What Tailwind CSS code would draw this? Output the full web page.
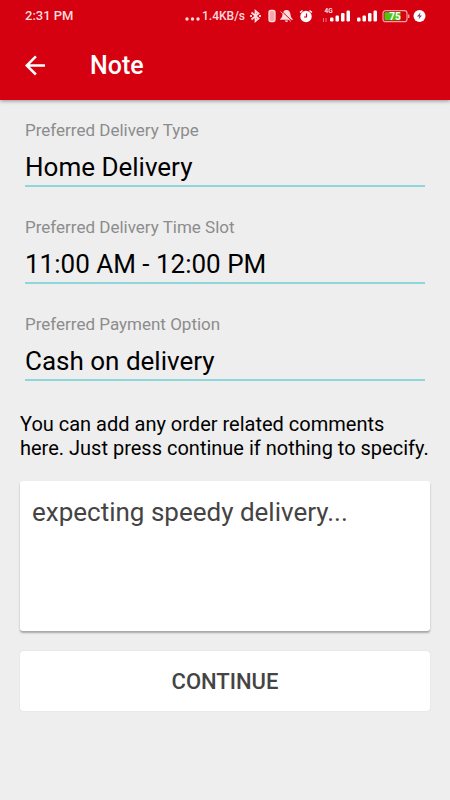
<!DOCTYPE html>
<html lang="en">
<head>
    <meta charset="UTF-8">
    <meta name="viewport" content="width=device-width, initial-scale=1.0">
    <title>Note</title>
    <script src="https://cdn.jsdelivr.net/npm/@tailwindcss/browser@4"></script>
</head>
<body class="bg-[#eeeeee] text-black font-['Roboto',sans-serif] min-h-screen">

    <header class="bg-[#d50010] text-white shadow-[0_1px_4px_rgba(0,0,0,0.4)]">
        <!-- Status bar -->
        <div class="flex items-center justify-between h-8 pl-[25px] pr-6 text-[#ffdcdc] text-[12px] font-medium">
            <span class="text-[13px]">2:31 PM</span>
            <div class="flex items-center">
                <svg class="w-4 h-4 mr-px" viewBox="0 0 16 16" fill="currentColor"><circle cx="2" cy="11" r="1.7"/><circle cx="7.5" cy="11" r="1.7"/><circle cx="13" cy="11" r="1.7"/></svg>
                <span>1.4KB/s</span>
                <!-- Bluetooth -->
                <svg class="w-3 h-4 ml-[5px]" viewBox="0 0 12 16" fill="none" stroke="currentColor" stroke-width="1.8"><path d="M1.5 4.5 L8.500 10.500 L5.500 13 V3 L8.500 5.500 L1.500 11.500"/><path d="M0 8h2M9 8h2"/></svg>
                <!-- Device battery -->
                <svg class="w-2 h-4 ml-1.5" viewBox="0 0 8 16"><rect x="1" y="2.5" width="6" height="11" rx="1.5" fill="#f3a9a9" stroke="currentColor" stroke-width="1.3"/></svg>
                <!-- Muted bell -->
                <svg class="w-4 h-4 ml-[3px]" viewBox="0 0 16 16" fill="currentColor"><path d="M7.500 2C5 2 3.800 4 3.500 6.500L3 9L.8 11.800h13.400L12 9l-.5-2.500C11.200 4 10 2 7.500 2z"/><path d="M5.800 12.500h3.400a1.700 1.500 0 0 1-3.400 0z"/><path d="M2.500 3l10.500 10" stroke="#d50010" stroke-width="1"/><path d="M1.500 3.500l10.500 10" stroke="currentColor" stroke-width=".8"/></svg>
                <!-- Alarm -->
                <svg class="w-[14px] h-4 ml-1" viewBox="0 0 14 16"><circle cx="7" cy="8.500" r="5.700" fill="#fff"/><path d="M1 4.500L3.500 2.500M13 4.500L10.500 2.500" stroke="#fff" stroke-width="1.500"/><path d="M7.500 5.500v3.500H5" fill="none" stroke="#d50010" stroke-width="1.200"/></svg>
                <!-- Signal with network type -->
                <svg class="w-7 h-4 ml-[10px]" viewBox="0 0 28 16" fill="#fff"><text x="1.500" y="5" font-size="6.500" font-weight="500">4G</text><path d="M.5 10v4M3 10v4" stroke="#f08080" stroke-width=".9"/><rect x="7" y="9.500" width="3.500" height="4" rx="1.200"/><rect x="12.500" y="7.500" width="3.500" height="6" rx="1.200"/><rect x="18" y="5" width="3.500" height="8.500" rx="1.200"/><rect x="23.500" y="2.500" width="3.500" height="11" rx="1.200"/></svg>
                <svg class="w-5 h-4 ml-1.5" viewBox="0 0 20 16" fill="#fff"><rect x="0" y="9.500" width="3.500" height="4" rx="1.200"/><rect x="5.500" y="7.500" width="3.500" height="6" rx="1.200"/><rect x="11" y="5" width="3.500" height="8.500" rx="1.200"/><rect x="16.500" y="2.500" width="3.500" height="11" rx="1.200"/></svg>
                <!-- Battery level -->
                <svg class="w-7 h-4 ml-[5px]" viewBox="0 0 28 16"><rect x="1" y="2.700" width="24" height="11" rx="2.500" fill="none" stroke="#f7a0a0" stroke-width="1.200"/><rect x="2.500" y="4.200" width="16" height="8" rx="1" fill="#4fc414"/><path d="M26.700 6.500v3.500" stroke="#f7a0a0" stroke-width="1.400"/><text x="13" y="11.700" font-size="10" font-weight="700" fill="#fff" text-anchor="middle">75</text></svg>
                <!-- Charging -->
                <svg class="w-[13px] h-4 ml-[3px]" viewBox="0 0 13 16"><circle cx="6.500" cy="8" r="6" fill="#fff"/><path d="M7.500 4.500L4 8.600h2.400L5.500 11.500l3.500-4H6.800z" fill="#7c4858"/></svg>
            </div>
        </div>

        <!-- App bar -->
        <div class="flex items-center h-[68px] pl-5">
            <button type="button" aria-label="Back" class="w-[30px] h-[30px]">
                <svg class="w-[30px] h-[30px]" viewBox="0 0 24 24" fill="currentColor"><path d="M20 10.500H7.830l5.590-5.590L12 3.500l-8 8 8 8 1.410-1.410L7.830 12.500H20v-2z"/></svg>
            </button>
            <h1 class="ml-10 text-[25px] font-medium">Note</h1>
        </div>
    </header>

    <main class="px-5 pt-[18px]">
        <form>
            <div class="flex flex-col gap-7 px-[5px]">
                <div class="flex flex-col">
                    <label for="deliveryType" class="text-[17px] leading-6 text-[#8c8c8c]">Preferred Delivery Type</label>
                    <input type="text" id="deliveryType" value="Home Delivery" class="w-full h-[45px] pt-1.5 text-[26px] border-b-2 border-[#8dd6dc] outline-none">
                </div>
                <div class="flex flex-col">
                    <label for="timeSlot" class="text-[17px] leading-6 text-[#8c8c8c]">Preferred Delivery Time Slot</label>
                    <input type="text" id="timeSlot" value="11:00 AM - 12:00 PM" class="w-full h-[45px] pt-1.5 text-[26px] border-b-2 border-[#8dd6dc] outline-none">
                </div>
                <div class="flex flex-col">
                    <label for="payment" class="text-[17px] leading-6 text-[#8c8c8c]">Preferred Payment Option</label>
                    <input type="text" id="payment" value="Cash on delivery" class="w-full h-[45px] pt-1.5 text-[26px] border-b-2 border-[#8dd6dc] outline-none">
                </div>
            </div>

            <label for="comments" class="block mt-[31px] text-[20px] leading-6">You can add any order related comments here. Just press continue if nothing to specify.</label>

            <textarea id="comments" class="block w-full h-[150px] mt-[21px] px-3 py-[15px] bg-white rounded-[3px] text-[26px] leading-8 text-[#444444] shadow-[0_2px_2px_rgba(0,0,0,0.3)] resize-none outline-none">expecting speedy delivery...</textarea>

            <button type="button" class="block w-full h-[60px] mt-5 bg-white rounded-[3px] text-[22px] font-medium text-[#444444] shadow-[0_0_1px_rgba(0,0,0,0.2)]">CONTINUE</button>
        </form>
    </main>

</body>
</html>
